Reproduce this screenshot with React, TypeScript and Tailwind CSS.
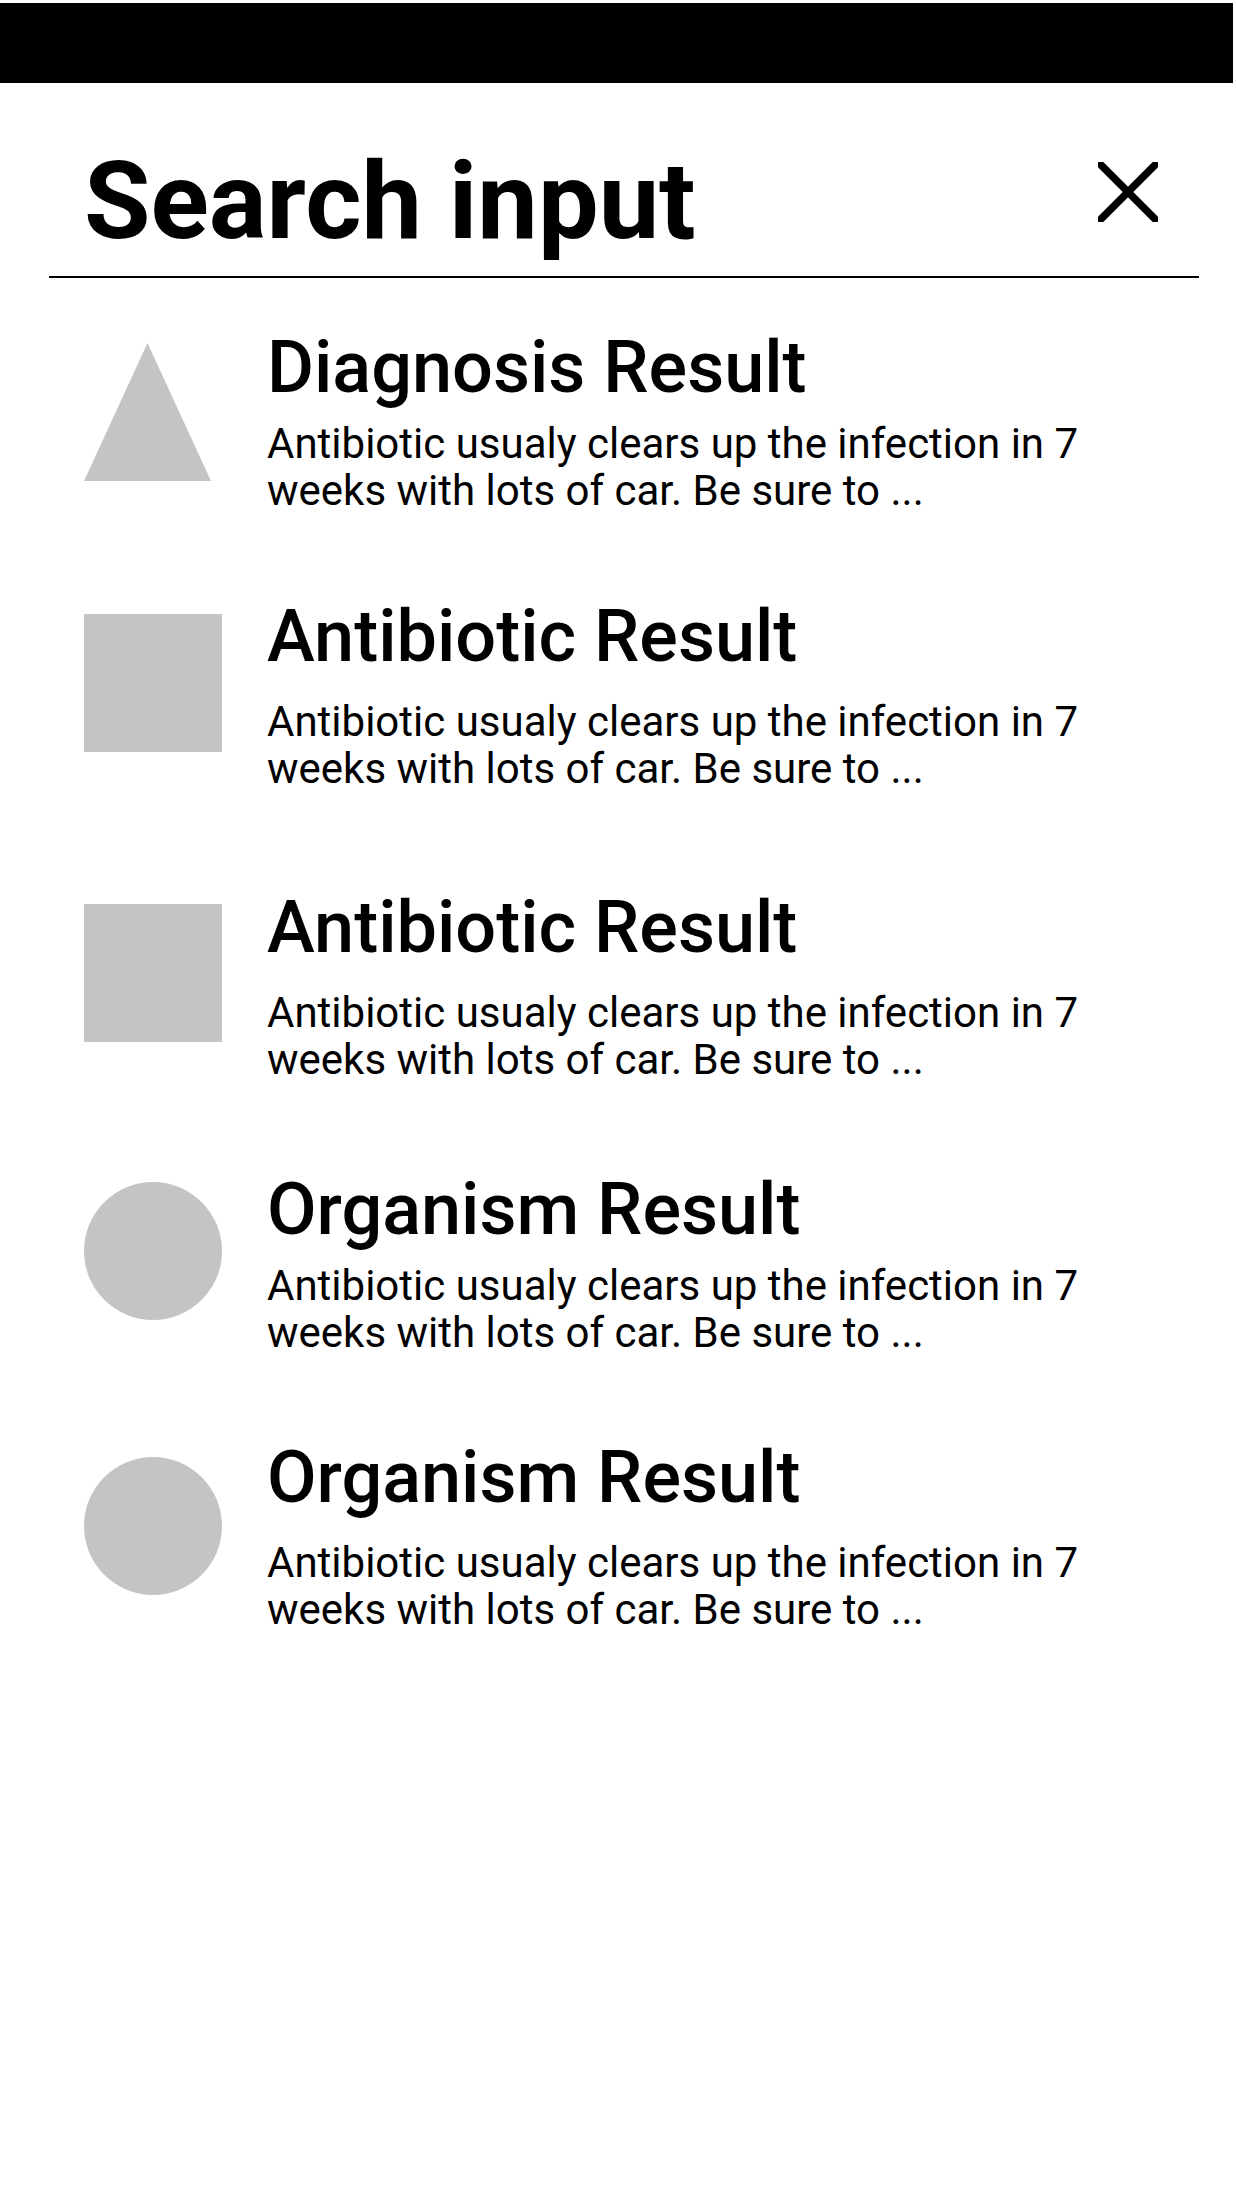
const results = [
  { shape: "triangle", title: "Diagnosis Result", top: "mt-[54px]", gap: "mt-[16px]", shapeTop: "mt-[11px]" },
  { shape: "square", title: "Antibiotic Result", top: "mt-[87px]", gap: "mt-[25px]", shapeTop: "mt-[13px]" },
  { shape: "square", title: "Antibiotic Result", top: "mt-[100px]", gap: "mt-[25px]", shapeTop: "mt-[12px]" },
  { shape: "circle", title: "Organism Result", top: "mt-[91px]", gap: "mt-[16px]", shapeTop: "mt-[8px]" },
  { shape: "circle", title: "Organism Result", top: "mt-[86px]", gap: "mt-[25px]", shapeTop: "mt-[15px]" },
];

function Shape({ kind }: { kind: string }) {
  if (kind === "triangle") {
    return (
      <svg width="127" height="138" viewBox="0 0 127 138" className="block">
        <polygon points="63.5,0 127,138 0,138" fill="#c4c4c4" />
      </svg>
    );
  }
  if (kind === "circle") {
    return <div className="w-[138px] h-[138px] rounded-full bg-[#c4c4c4]" />;
  }
  return <div className="w-[138px] h-[138px] bg-[#c4c4c4]" />;
}

function CloseIcon() {
  return (
    <svg width="60" height="60" viewBox="0 0 60 60" className="block overflow-hidden">
      <path d="M-6 -6 L66 66 M66 -6 L-6 66" stroke="#000" strokeWidth="7.5" />
    </svg>
  );
}

export default function App() {
  return (
    <div className="min-h-[2196px] w-[1236px] bg-white pt-[3px] font-['Roboto',sans-serif] text-black">
      <div className="h-[80px] mr-[3px] bg-black" />

      <header className="pt-[64px] pl-[84px] pr-[78px] flex items-start justify-between">
        <h1 className="text-[108px] leading-none font-bold">Search input</h1>
        <button className="mt-[15px]" aria-label="Close">
          <CloseIcon />
        </button>
      </header>
      <div className="mt-[21px] ml-[49px] w-[1150px] h-[2px] bg-black" />

      <ul className="pl-[84px]">
        {results.map((r, i) => (
          <li key={i} className={`${r.top} flex items-start gap-[45px]`}>
            <div className={`${r.shapeTop} w-[138px] shrink-0`}>
              <Shape kind={r.shape} />
            </div>
            <div className="flex flex-col">
              <h2 className="text-[72px] leading-none font-medium">{r.title}</h2>
              <p className={`${r.gap} w-[880px] text-[42px] leading-[47px] font-normal`}>
                Antibiotic usualy clears up the infection in 7 weeks with lots of car. Be sure to ...
              </p>
            </div>
          </li>
        ))}
      </ul>
    </div>
  );
}
